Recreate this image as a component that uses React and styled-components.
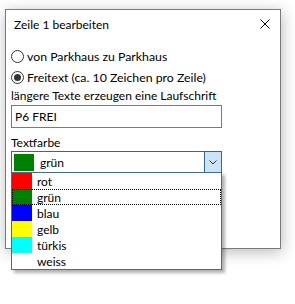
import styled, { createGlobalStyle } from "styled-components";

const Global = createGlobalStyle`
  html, body {
    margin: 0;
    background: #fff;
  }
  body {
    font-family: Lato, "Noto Sans", "Liberation Sans", sans-serif;
    font-size: 12px;
    color: #000;
  }
`;

const Page = styled.div`
  padding: 9px 0 0 5px;
  height: 304px;
  box-sizing: border-box;
`;

const Dialog = styled.div`
  position: relative;
  width: 276px;
  height: 240px;
  box-sizing: border-box;
  border: 1px solid #7a7a7a;
  background: #fff;
  box-shadow: 1px 3px 14px rgba(0, 0, 0, 0.28);
`;

const TitleBar = styled.div`
  height: 28px;
  display: flex;
  align-items: center;
  justify-content: space-between;
  padding: 0 10px 0 8px;
`;

const Title = styled.span`
  font-size: 12px;
`;

const Body = styled.div`
  padding: 8px 0 0 5px;
  display: flex;
  flex-direction: column;
`;

const RadioRow = styled.label`
  height: 21px;
  display: flex;
  align-items: center;
  gap: 3px;
  font-size: 12.3px;
`;

const RadioCircle = styled.span`
  width: 13px;
  height: 13px;
  box-sizing: border-box;
  border-radius: 50%;
  border: 1px solid #333;
  display: flex;
  align-items: center;
  justify-content: center;
  &::after {
    content: "";
    width: 7px;
    height: 7px;
    border-radius: 50%;
    background: ${(p) => (p.$checked ? "#333" : "transparent")};
  }
`;

const Hint = styled.div`
  line-height: 16px;
`;

const TextInput = styled.div`
  margin-top: 1px;
  width: 211px;
  height: 23px;
  box-sizing: border-box;
  border: 1px solid #7a7a7a;
  padding-left: 3px;
  display: flex;
  align-items: center;
`;

const Label = styled.div`
  margin-top: 7px;
  line-height: 16px;
`;

const Combo = styled.div`
  width: 211px;
  height: 22px;
  box-sizing: border-box;
  border: 1px solid #2f6a96;
  display: flex;
  align-items: stretch;
`;

const ComboValue = styled.div`
  flex: 1;
  display: flex;
  align-items: center;
  padding-left: 2px;
  gap: 6px;
`;

const Swatch = styled.span`
  width: 20px;
  height: ${(p) => p.$h || 16}px;
  background: ${(p) => p.$color};
  flex: none;
`;

const ComboButton = styled.div`
  width: 16px;
  border-left: 1px solid #2f6a96;
  background: #cce4f7;
  display: flex;
  align-items: center;
  justify-content: center;
`;

const List = styled.div`
  position: absolute;
  left: 5px;
  top: 162px;
  width: 211px;
  box-sizing: border-box;
  border: 1px solid #3b6f96;
  background: #fff;
  box-shadow: 3px 3px 3px rgba(0, 0, 0, 0.3);
`;

const Item = styled.div`
  height: 16px;
  display: flex;
  align-items: center;
  gap: 5px;
  outline: ${(p) => (p.$focus ? "1px dotted #000" : "none")};
  outline-offset: -1px;
`;

const colors = [
  ["#ff0000", "rot"],
  ["#008000", "grün"],
  ["#0000ff", "blau"],
  ["#ffff00", "gelb"],
  ["#00ffff", "türkis"],
  ["#ffffff", "weiss"],
];

export default function App() {
  return (
    <Page>
      <Global />
      <Dialog>
        <TitleBar>
          <Title>Zeile 1 bearbeiten</Title>
          <svg width="10" height="10" viewBox="0 0 10 10">
            <path d="M0.5 0.5L9.5 9.5M9.5 0.5L0.5 9.5" stroke="#000" strokeWidth="1" />
          </svg>
        </TitleBar>
        <Body>
          <RadioRow>
            <RadioCircle />
            von Parkhaus zu Parkhaus
          </RadioRow>
          <RadioRow>
            <RadioCircle $checked />
            Freitext (ca. 10 Zeichen pro Zeile)
          </RadioRow>
          <Hint>längere Texte erzeugen eine Laufschrift</Hint>
          <TextInput>P6 FREI</TextInput>
          <Label>Textfarbe</Label>
          <Combo>
            <ComboValue>
              <Swatch $color="#008000" $h={17} />
              grün
            </ComboValue>
            <ComboButton>
              <svg width="8" height="5" viewBox="0 0 8 5">
                <path d="M0.5 0.5L4 4L7.5 0.5" stroke="#333" fill="none" strokeWidth="1" />
              </svg>
            </ComboButton>
          </Combo>
        </Body>
        <List>
          {colors.map(([c, name]) => (
            <Item key={name} $focus={name === "grün"}>
              <Swatch $color={c} />
              {name}
            </Item>
          ))}
        </List>
      </Dialog>
    </Page>
  );
}
